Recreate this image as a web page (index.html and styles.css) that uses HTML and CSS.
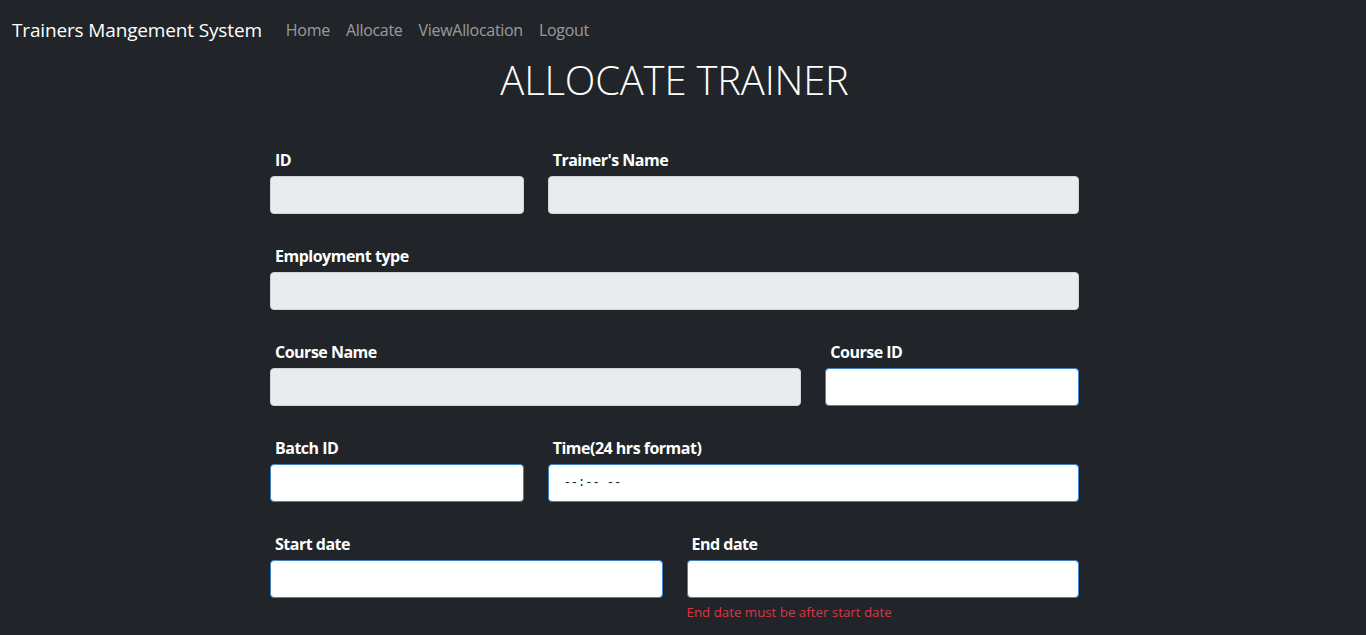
FILE: index.html
```html
<!DOCTYPE html>
<html lang="en">
<head>
<meta charset="utf-8">
<title>Allocate Trainer</title>
<link rel="stylesheet" href="styles.css">
</head>
<body>
<nav class="navbar">
  <a class="brand" href="#">Trainers Mangement System</a>
  <ul class="nav-links">
    <li><a href="#">Home</a></li>
    <li><a href="#">Allocate</a></li>
    <li><a href="#">ViewAllocation</a></li>
    <li><a href="#">Logout</a></li>
  </ul>
</nav>
<main class="page">
  <h1 class="title">ALLOCATE TRAINER</h1>
  <form class="form">
    <div class="row">
      <div class="col col-4"><label class="label">ID</label><input class="control" disabled></div>
      <div class="col col-8"><label class="label">Trainer's Name</label><input class="control" disabled></div>
    </div>
    <div class="row">
      <div class="col col-12"><label class="label">Employment type</label><input class="control" disabled></div>
    </div>
    <div class="row">
      <div class="col col-8"><label class="label">Course Name</label><input class="control" disabled></div>
      <div class="col col-4"><label class="label">Course ID</label><input class="control"></div>
    </div>
    <div class="row">
      <div class="col col-4"><label class="label">Batch ID</label><input class="control"></div>
      <div class="col col-8"><label class="label">Time(24 hrs format)</label><input class="control time" value="--:-- --"></div>
    </div>
    <div class="row">
      <div class="col col-6"><label class="label">Start date</label><input class="control"></div>
      <div class="col col-6"><label class="label">End date</label><input class="control"><div class="feedback">End date must be after start date</div></div>
    </div>
  </form>
</main>
</body>
</html>
```
FILE: styles.css
```css
* { box-sizing: border-box; }
html, body { margin: 0; }
body {
  background: #212529;
  color: #fff;
  font-family: "Open Sans", "Noto Sans", sans-serif;
  font-size: 16px;
  line-height: 1.5;
  height: 635px;
  overflow: hidden;
}
.navbar {
  display: flex;
  align-items: center;
  padding: 10px 12px 6px;
  height: 56px;
}
.brand {
  font-size: 19px;
  letter-spacing: -0.15px;
  line-height: 30px;
  color: #fff;
  text-decoration: none;
  margin-right: 16px;
  padding: 5px 0;
}
.nav-links {
  display: flex;
  list-style: none;
  margin: 0;
  padding: 0;
}
.nav-links a {
  display: block;
  padding: 8px;
  color: rgba(255,255,255,.55);
  letter-spacing: -0.3px;
  text-decoration: none;
}
.page {
  padding-right: 17px;
}
.title {
  margin: 0;
  text-align: center;
  font-size: 40px;
  font-weight: 300;
  line-height: 48px;
  letter-spacing: -0.2px;
}
.form {
  width: 809px;
  margin: 44px auto 0;
}
.row {
  display: flex;
  margin: 0 -12px 30px;
}
.col { padding: 0 12px; }
.col-4 { flex: 0 0 33.3333%; }
.col-6 { flex: 0 0 50%; }
.col-8 { flex: 0 0 66.6667%; }
.col-12 { flex: 0 0 100%; }
.label {
  display: block;
  font-weight: 700;
  letter-spacing: -0.5px;
  padding-left: 5px;
  margin-bottom: 4px;
  line-height: 24px;
}
.control {
  display: block;
  width: 100%;
  height: 38px;
  padding: 6px 12px;
  font: inherit;
  color: #212529;
  background: #fff;
  border: 1px solid #3d85c6;
  border-radius: 4px;
  outline: none;
}
.control:disabled {
  background: #e9ecef;
  border-color: #ced4da;
}
.time {
  font-family: "Liberation Mono", monospace;
  font-size: 12px;
  padding-left: 15px;
}
.feedback {
  margin-top: 4px;
  font-size: 13.3px;
  line-height: 21px;
  color: #dc3545;
}
```
